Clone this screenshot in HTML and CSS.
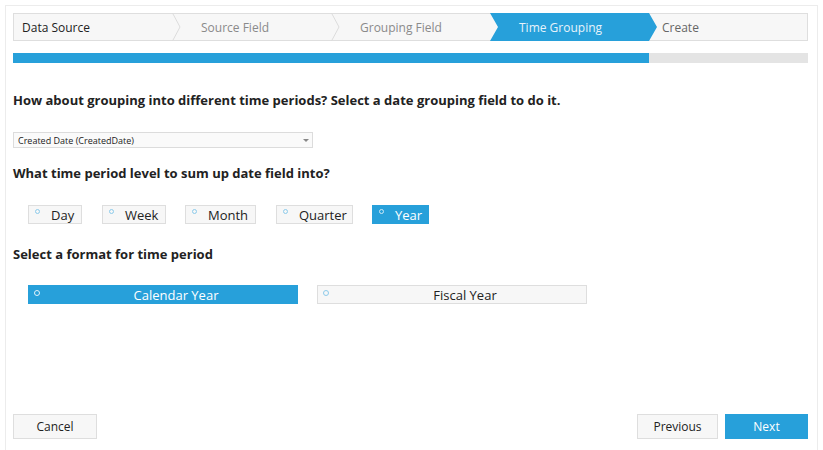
FILE: index.html
```html
<!DOCTYPE html>
<html>
<head>
<meta charset="utf-8">
<link rel="stylesheet" href="styles.css">
</head>
<body>
<div class="panel">
  <div class="steps">
    <div class="step first done">Data Source</div>
    <div class="step"><svg class="chev" width="9" height="28" viewBox="0 0 9 28"><polyline points="0.5,0 8,14 0.5,28" fill="none" stroke="#dcdcdc" stroke-width="1"/></svg>Source Field</div>
    <div class="step"><svg class="chev" width="9" height="28" viewBox="0 0 9 28"><polyline points="0.5,0 8,14 0.5,28" fill="none" stroke="#dcdcdc" stroke-width="1"/></svg>Grouping Field</div>
    <div class="step active">Time Grouping</div>
    <div class="step after">Create</div>
  </div>
  <div class="progress"><div class="fill"></div></div>

  <h2 class="q q1">How about grouping into different time periods? Select a date grouping field to do it.</h2>
  <div class="select"><span>Created Date (CreatedDate)</span><span class="caret"></span></div>

  <h2 class="q q2">What time period level to sum up date field into?</h2>
  <div class="radios">
    <div class="radio r-day"><span class="dot"></span>Day</div>
    <div class="radio r-week"><span class="dot"></span>Week</div>
    <div class="radio r-month"><span class="dot"></span>Month</div>
    <div class="radio r-quarter"><span class="dot"></span>Quarter</div>
    <div class="radio r-year on"><span class="dot"></span>Year</div>
  </div>

  <h2 class="q q3">Select a format for time period</h2>
  <div class="formats">
    <div class="fmt on"><span class="dot"></span>Calendar Year</div>
    <div class="fmt"><span class="dot"></span>Fiscal Year</div>
  </div>

  <div class="footer">
    <button class="btn cancel">Cancel</button>
    <div class="nav">
      <button class="btn prev">Previous</button>
      <button class="btn next">Next</button>
    </div>
  </div>
</div>
</body>
</html>
```
FILE: styles.css
```css
html, body {
  margin: 0;
  padding: 0;
  background: #fff;
  overflow: hidden;
}
body {
  font-family: "Open Sans", "Noto Sans", sans-serif;
  color: #222;
}
.panel {
  margin: 5px 0 0 5px;
  width: 797px;
  height: 470px;
  border: 1px solid #ececec;
  padding: 7px;
}
.steps {
  display: flex;
  height: 26px;
  border: 1px solid #dedede;
  background: #f7f7f7;
  width: 793px;
}
.step {
  position: relative;
  width: 159px;
  flex: 0 0 159px;
  box-sizing: border-box;
  padding-left: 29px;
  padding-top: 1px;
  font-size: 12px;
  line-height: 26px;
  color: #8a8a8a;
  white-space: nowrap;
}
.step.first {
  flex-basis: 158px;
  width: 158px;
  padding-left: 8px;
  color: #222;
}
.chev {
  position: absolute;
  left: 0;
  top: -1px;
}
.step.active {
  flex: 0 0 167px;
  width: 167px;
  margin-right: -8px;
  margin-top: -1px;
  margin-bottom: -1px;
  padding-top: 1px;
  line-height: 28px;
  background: #27a0da;
  color: #e6f3fb;
  z-index: 1;
  clip-path: polygon(0 0, 159px 0, 167px 50%, 159px 100%, 0 100%, 8px 50%);
}
.step.after {
  flex: 1 1 auto;
  padding-left: 13px;
  color: #666;
}
.progress {
  margin-top: 12px;
  height: 10px;
  background: #e4e4e4;
  width: 795px;
}
.fill {
  width: 636px;
  height: 100%;
  background: #27a0da;
}
.q {
  margin: 0;
  font-size: 13px;
  font-weight: bold;
  line-height: 18px;
  color: #222;
  white-space: nowrap;
}
.q1 { margin-top: 28px; }
.select {
  margin-top: 23px;
  height: 14px;
  border: 1px solid #dcdcdc;
  background: #fafafa;
  font-size: 9px;
  line-height: 15px;
  padding-left: 4px;
  position: relative;
  box-sizing: content-box;
  width: 294px;
}
.caret {
  position: absolute;
  right: 3px;
  top: 6px;
  border-left: 3px solid transparent;
  border-right: 3px solid transparent;
  border-top: 3px solid #888;
}
.q2 { margin-top: 16px; }
.radios {
  display: flex;
  margin-top: 23px;
  margin-left: 15px;
}
.radio, .fmt {
  position: relative;
  height: 17px;
  border: 1px solid #dedede;
  background: #f7f7f7;
  font-size: 13px;
  line-height: 19px;
  color: #222;
  box-sizing: content-box;
}
.radio { padding-left: 22px; }
.r-day { width: 30px; margin-right: 20px; }
.r-week { width: 40px; margin-right: 19px; }
.r-month { width: 47px; margin-right: 20px; }
.r-quarter { width: 53px; margin-right: 19px; }
.r-year { width: 33px; }
.on {
  background: #27a0da;
  border-color: #27a0da;
  color: #fff;
}
.dot {
  position: absolute;
  left: 6px;
  top: 3px;
  width: 3px;
  height: 3px;
  border: 1.5px solid #8dcbeb;
  border-radius: 50%;
}
.on .dot {
  border-color: #cde8f6;
}
.q3 { margin-top: 21px; }
.formats {
  display: flex;
  margin-top: 22px;
  margin-left: 15px;
}
.fmt {
  width: 242px;
  padding-left: 26px;
  text-align: center;
  margin-right: 19px;
}
.fmt .dot { left: 5px; top: 4px; width: 4px; height: 4px; }
.fmt.on .dot { border-color: #e3f2fa; }
.footer {
  display: flex;
  justify-content: space-between;
  margin-top: 110px;
  width: 795px;
}
.nav { display: flex; gap: 7px; }
.btn {
  font-family: "Open Sans", "Noto Sans", sans-serif;
  font-size: 12px;
  height: 25px;
  border: 1px solid #dedede;
  background: #f7f7f7;
  color: #222;
  padding: 0;
  margin: 0;
}
.cancel { width: 84px; }
.prev { width: 81px; }
.next {
  width: 83px;
  background: #27a0da;
  border-color: #27a0da;
  color: #fff;
}
```
